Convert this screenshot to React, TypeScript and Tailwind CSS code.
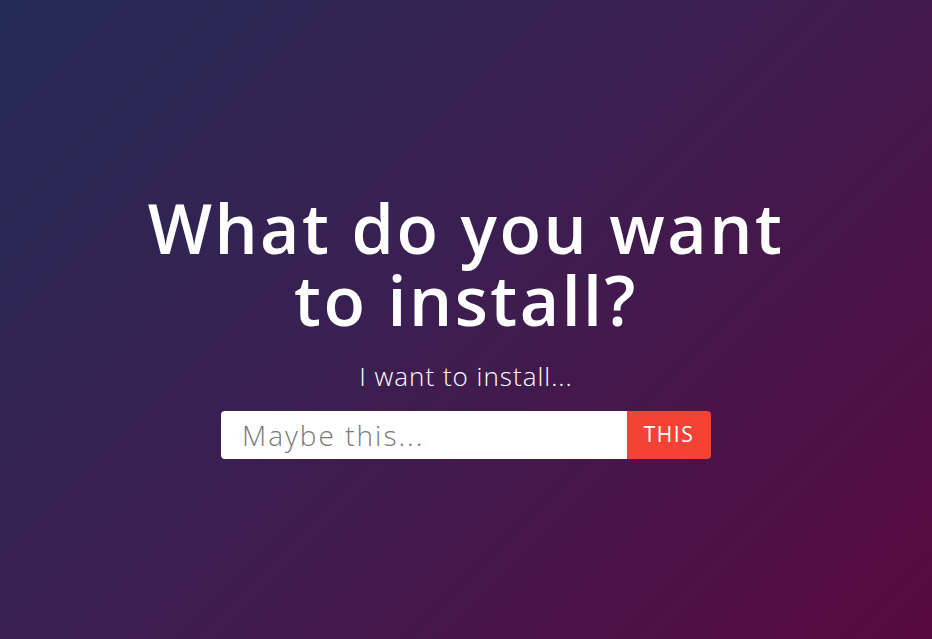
export default function App() {
  return (
    <div
      className="min-h-screen w-full flex flex-col items-center text-white bg-[linear-gradient(135deg,#232b55_0%,#3b1f52_45%,#58093f_100%)]"
      style={{ fontFamily: '"Open Sans", "Noto Sans", sans-serif' }}
    >
      <h1 className="mt-[192px] text-center text-[68px] leading-[72px] font-semibold tracking-[2.5px]">
        What do you want
        <br />
        to install?
      </h1>
      <p className="mt-[24px] text-[26px] leading-[32px] font-light tracking-[1px]">I want to install...</p>
      <form className="mt-[19px] flex w-[490px] h-[48px] rounded-[4px] overflow-hidden">
        <input
          type="text"
          placeholder="Maybe this..."
          className="flex-1 bg-white pl-[21px] text-[28px] font-light tracking-[2px] text-gray-700 placeholder:text-[#7a7a7a] outline-none"
        />
        <button type="button" className="w-[84px] bg-[#f44336] text-white text-[21px] font-normal tracking-[1.5px]">
          THIS
        </button>
      </form>
    </div>
  );
}
